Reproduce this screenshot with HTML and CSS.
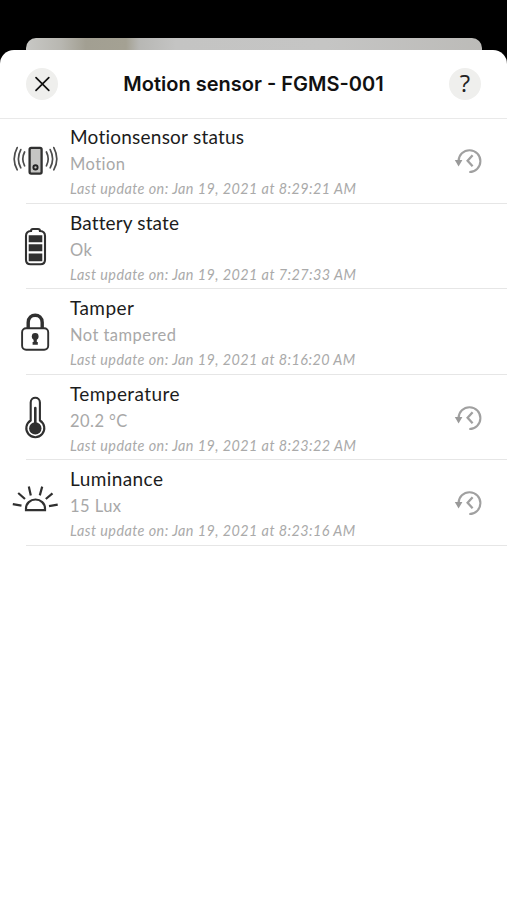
FILE: index.html
```html
<!DOCTYPE html>
<html lang="en">
<head>
<meta charset="utf-8">
<title>Motion sensor - FGMS-001</title>
<link rel="stylesheet" href="styles.css">
</head>
<body>
<svg class="defs" width="0" height="0" aria-hidden="true">
  <symbol id="history" viewBox="0 0 28 26">
    <path d="M4.6 13A10.9 10.9 0 1 1 15.3 24" fill="none" stroke="#a0a0a0" stroke-width="2.1"/>
    <path d="M.8 12H8.4L4.6 18.6Z" fill="#999"/>
    <path d="M18.6 7.2L13.6 12.8L18.6 18.2" fill="none" stroke="#a0a0a0" stroke-width="2.3"/>
  </symbol>
</svg>
<div class="backdrop"></div>
<main class="sheet">
  <header class="bar">
    <button class="round" aria-label="Close"><svg width="32" height="32" viewBox="0 0 32 32"><path d="M10 9.6L22.8 22.4M22.8 9.6L10 22.4" stroke="#111" stroke-width="1.7" stroke-linecap="round"/></svg></button>
    <h1>Motion sensor - FGMS-001</h1>
    <button class="round help">?</button>
  </header>
  <ul class="list">
    <li class="row">
      <svg class="icon" viewBox="0 0 70 85"><g fill="none" stroke="#4c4c4c" stroke-width="1.7" stroke-linecap="round"><rect x="29.6" y="28.9" width="12" height="25.8" rx="1.6" fill="#c5c5c3" stroke="#303030" stroke-width="2.3"/><circle cx="35.5" cy="48.4" r="2.1" stroke="#222" stroke-width="1.9"/><path d="M17.2 28.6Q11.2 40 17.2 50.8M20.8 30.6Q16 40 20.8 48.8M24.6 33Q21 40 24.6 46.8M53.8 28.6Q59.8 40 53.8 50.8M50.2 30.6Q55 40 50.2 48.8M46.4 33Q50 40 46.4 46.8"/></g></svg>
      <div class="text"><h2 class="name long">Motionsensor status</h2><p class="value">Motion</p><p class="date">Last update on: Jan 19, 2021 at 8:29:21 AM</p></div>
      <svg class="history"><use href="#history"/></svg>
    </li>
    <li class="row">
      <svg class="icon" viewBox="0 0 70 85"><path d="M31 26Q31 24 33 24H38Q40 24 40 26Q45 26.2 45 31V54.7Q45 59.2 40.5 59.2H30.5Q26 59.2 26 54.7V31Q26 26.2 31 26Z" fill="none" stroke="#303030" stroke-width="2.1"/><path d="M28.7 30.2H42.3V37.2H28.7ZM28.7 39.2H42.3V46.2H28.7ZM28.7 48.4H42.3V56.2H28.7Z" fill="#303030"/></svg>
      <div class="text"><h2 class="name tight">Battery state</h2><p class="value">Ok</p><p class="date">Last update on: Jan 19, 2021 at 7:27:33 AM</p></div>
    </li>
    <li class="row">
      <svg class="icon" viewBox="0 0 70 85"><path d="M28.2 38V32.5C28.2 22.8 42.2 22.8 42.2 32.5V38" fill="none" stroke="#303030" stroke-width="3.4"/><rect x="22.1" y="38.2" width="26.1" height="21.6" rx="4" fill="none" stroke="#303030" stroke-width="1.9"/><circle cx="35.2" cy="46.5" r="3.4" fill="#303030"/><path d="M33.6 46H36.8V52H37.8V54.8H32.6V52H33.6Z" fill="#303030"/></svg>
      <div class="text"><h2 class="name">Tamper</h2><p class="value">Not tampered</p><p class="date">Last update on: Jan 19, 2021 at 8:16:20 AM</p></div>
    </li>
    <li class="row">
      <svg class="icon" viewBox="0 0 70 85"><path d="M30.7 44.5V26.5C30.7 20.2 39.9 20.2 39.9 26.5V44.5A9 9 0 1 1 30.7 44.5Z" fill="none" stroke="#303030" stroke-width="2.1"/><circle cx="35.3" cy="52.4" r="6.2" fill="#303030"/><path d="M35.3 32V49" stroke="#303030" stroke-width="2.6" stroke-linecap="round"/></svg>
      <div class="text"><h2 class="name">Temperature</h2><p class="value">20.2 °C</p><p class="date">Last update on: Jan 19, 2021 at 8:23:22 AM</p></div>
      <svg class="history"><use href="#history"/></svg>
    </li>
    <li class="row">
      <svg class="icon" viewBox="0 0 70 85"><path d="M26 49.2V47.5A9.5 9 0 0 1 45 47.5V49.2Z" fill="none" stroke="#303030" stroke-width="2.2"/><path d="M12.8 43.2L21.5 44.6M18.2 32L25 38M28.8 25.6L30.8 34.4M42.2 25.6L39.8 34.4M52.5 32.3L45.8 38M57.7 43.6L49 45.1" stroke="#303030" stroke-width="2.2"/></svg>
      <div class="text"><h2 class="name">Luminance</h2><p class="value">15 Lux</p><p class="date">Last update on: Jan 19, 2021 at 8:23:16 AM</p></div>
      <svg class="history"><use href="#history"/></svg>
    </li>
  </ul>
</main>
</body>
</html>
```
FILE: styles.css
```css
* { box-sizing: border-box; }
body {
  margin: 0;
  height: 900px;
  display: flex;
  flex-direction: column;
  overflow: hidden;
  background: #000;
  font-family: Lato, sans-serif;
}
.defs { position: absolute; }
h1, h2, p, ul { margin: 0; padding: 0; font-weight: 400; }
.backdrop {
  flex: none;
  height: 12px;
  margin: 38px 25px 0 26px;
  border-radius: 10px 10px 0 0;
  background: linear-gradient(90deg, #c8c8c5 0, #b8b7b1 35px, #a29f92 60px, #a4a193 100px, #b7b7b4 113px, #c4c4c3 150px, #c5c5c4 300px, #bcbbb8 100%);
}
.sheet {
  flex: 1;
  background: #fff;
  border-radius: 14px 14px 0 0;
}
.bar {
  display: flex;
  align-items: center;
  justify-content: space-between;
  height: 69px;
  padding: 0 26px;
  border-bottom: 1px solid #e9e9e9;
}
.bar h1 {
  font: 600 20px/24px Inter, sans-serif;
  white-space: nowrap;
  color: #111;
}
.round {
  width: 32px;
  height: 32px;
  padding: 0;
  border: 0;
  border-radius: 50%;
  background: #efefed;
}
.round svg { display: block; }
.help { padding-bottom: 3px; font: 400 24px/29px "Open Sans", sans-serif; color: #222; }
.list { list-style: none; }
.row {
  position: relative;
  display: flex;
  height: 85.5px;
}
.row::after {
  content: "";
  position: absolute;
  left: 26px;
  right: 0;
  bottom: 1px;
  height: 1px;
  background: #e6e6e6;
}
.icon { flex: none; width: 70px; height: 85px; }
.text { flex: 1; padding-top: 5px; white-space: nowrap; }
.name { font-size: 19px; line-height: 26px; color: #1c1c1c; letter-spacing: .42px; }
.long { letter-spacing: .23px; }
.tight { letter-spacing: .14px; }
.value { font-size: 16.5px; line-height: 28px; color: #a8a8a8; letter-spacing: .45px; }
.date { font-size: 14.4px; line-height: 21px; font-style: italic; color: #aaa; letter-spacing: .43px; }
.history { flex: none; width: 28px; height: 26px; margin: 29px 25px 0 0; }
```
